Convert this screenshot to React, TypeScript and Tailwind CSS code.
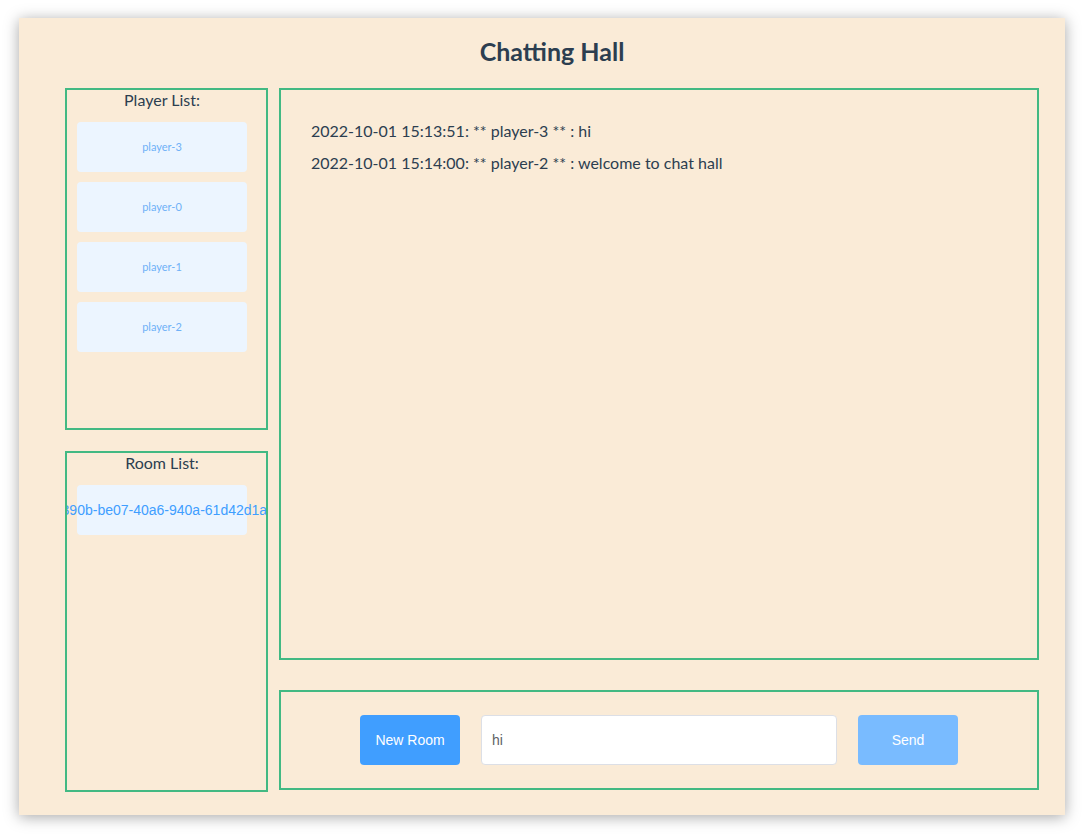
const players = ['player-3', 'player-0', 'player-1', 'player-2'];
const rooms = ['a7d2390b-be07-40a6-940a-61d42d1a5fc3'];
const messages = [
  '2022-10-01 15:13:51: ** player-3 ** : hi',
  '2022-10-01 15:14:00: ** player-2 ** : welcome to chat hall',
];

const ListPanel = ({
  title,
  items,
  itemClass,
  height,
}: {
  title: string;
  items: string[];
  itemClass: string;
  height: string;
}) => {
  return (
    <div className={`${height} border-2 border-[#42b983] overflow-hidden`}>
      <div className="ml-[10px] w-[170px] text-center">
        <div className="h-[24px] leading-[20px] text-[16px] text-[#2c3e50]">{title}</div>
        <div className="mt-[8px] flex flex-col gap-[10px]">
          {items.map((item) => (
            <div
              key={item}
              className={`h-[50px] rounded-[4px] bg-[#ecf5ff] flex items-center justify-center whitespace-nowrap ${itemClass}`}
            >
              {item}
            </div>
          ))}
        </div>
      </div>
    </div>
  );
};

export default function App() {
  return (
    <div className="min-h-[834px] bg-white pt-[18px] pl-[19px] font-['Lato',sans-serif]">
      <div className="w-[1046px] h-[797px] bg-[#faebd7] shadow-[0_2px_14px_rgba(0,0,0,0.35)] pl-[46px] pr-[26px]">
        <div className="h-[70px] pt-[19px] text-center">
          <h1 className="text-[25px] leading-[28px] font-bold text-[#2c3e50]">Chatting Hall</h1>
        </div>

        <div className="flex gap-[11px]">
          <div className="w-[203px] flex flex-col gap-[21px]">
            <ListPanel
              title="Player List:"
              items={players}
              height="h-[342px]"
              itemClass="text-[11px] text-[#6fb1f7]"
            />
            <ListPanel
              title="Room List:"
              items={rooms}
              height="h-[341px]"
              itemClass="text-[14px] text-[#409eff] font-['Liberation_Sans',Arial,sans-serif]"
            />
          </div>

          <div className="w-[760px] flex flex-col gap-[30px]">
            <div className="h-[572px] border-2 border-[#42b983] pt-[30px] px-[30px] flex flex-col gap-[10px]">
              {messages.map((m) => (
                <div key={m} className="text-[16px] leading-[22px] text-[#2c3e50]">
                  {m}
                </div>
              ))}
            </div>

            <div className="h-[100px] border-2 border-[#42b983] flex items-center justify-center gap-[21px] font-['Liberation_Sans',Arial,sans-serif] text-[14px]">
              <button className="w-[100px] h-[50px] rounded-[4px] bg-[#409eff] text-white">
                New Room
              </button>
              <input
                className="w-[356px] h-[50px] rounded-[4px] border border-[#dcdfe6] bg-white px-[10px] text-[14px] text-[#606266] outline-none"
                defaultValue="hi"
              />
              <button className="w-[100px] h-[50px] rounded-[4px] bg-[#79bbff] text-white">
                Send
              </button>
            </div>
          </div>
        </div>
      </div>
    </div>
  );
}
